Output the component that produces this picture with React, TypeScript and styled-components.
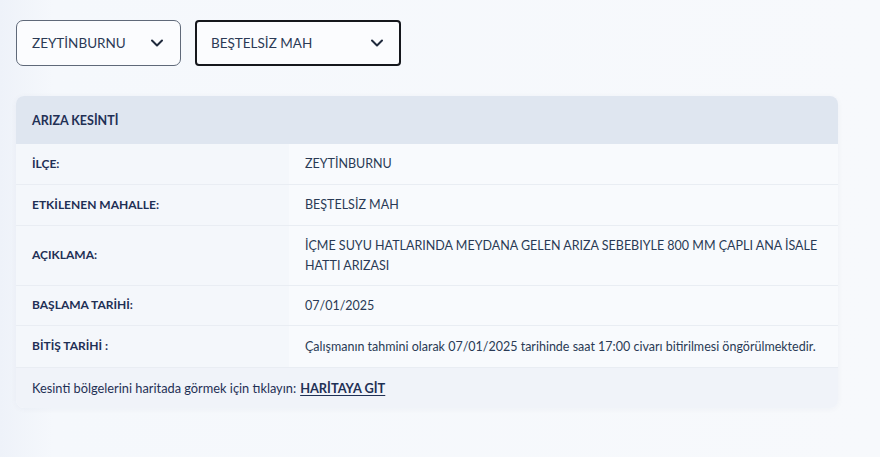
import React from "react";
import styled, { createGlobalStyle } from "styled-components";

const Global = createGlobalStyle`
  html, body { margin: 0; padding: 0; }
  *, *::before, *::after { box-sizing: border-box; }
  body {
    background: linear-gradient(90deg, #eef2f9 0%, #f5f8fc 6%, #f7f9fc 100%);
    font-family: Lato, "Noto Sans", sans-serif;
    color: #1f3055;
    min-height: 457px;
  }
`;

const Page = styled.div`
  padding: 20px 42px 40px 16px;
`;

const SelectRow = styled.div`
  display: flex;
  gap: 14px;
`;

const Select = styled.div<{ $w: number; $strong?: boolean }>`
  width: ${(p) => p.$w}px;
  height: 46px;
  display: flex;
  align-items: center;
  justify-content: space-between;
  padding: 0 ${(p) => (p.$strong ? 15 : 16)}px 0 ${(p) => (p.$strong ? 14 : 15)}px;
  background: #fbfcfe;
  border: ${(p) => (p.$strong ? "2px solid #15171c" : "1px solid #5f6979")};
  border-radius: ${(p) => (p.$strong ? 4 : 7)}px;
  font-size: 13.5px;
  color: #2b3a55;
`;

const Chevron = () => (
  <svg width="14" height="14" viewBox="0 0 14 14" fill="none">
    <path d="M2 4.5 L7 9.5 L12 4.5" stroke="#1f2a3d" strokeWidth="2" strokeLinecap="round" strokeLinejoin="round" />
  </svg>
);

const Card = styled.div`
  margin-top: 30px;
  width: 822px;
  border-radius: 8px;
  overflow: hidden;
  background: #f8fafd;
  box-shadow: 0 1px 6px rgba(30, 50, 90, 0.04);
`;

const Header = styled.div`
  height: 48px;
  display: flex;
  align-items: center;
  padding: 0 16px;
  background: #dfe6f0;
  font-size: 12.5px;
  font-weight: 700;
  color: #1f3055;
`;

const Row = styled.div<{ $h: number }>`
  display: grid;
  grid-template-columns: 273px 1fr;
  min-height: ${(p) => p.$h}px;
  border-bottom: 1px solid #e9edf3;
`;

const Label = styled.div`
  display: flex;
  align-items: center;
  padding: 0 16px 2px;
  background: #f4f7fb;
  font-size: 12px;
  font-weight: 700;
  color: #1f3055;
`;

const Value = styled.div`
  display: flex;
  align-items: center;
  padding: 0 16px;
  font-size: 12.5px;
  line-height: 20px;
  color: #2a3a55;
`;

const Footer = styled.div`
  height: 40px;
  display: flex;
  align-items: center;
  padding: 0 16px;
  background: #f0f3f9;
  font-size: 12.8px;
  color: #1f3055;
`;

const MapLink = styled.a`
  margin-left: 4px;
  font-weight: 700;
  color: #1f3055;
  text-decoration: underline;
  text-underline-offset: 2px;
`;

const rows: { label: string; value: string; h: number }[] = [
  { label: "İLÇE:", value: "ZEYTİNBURNU", h: 41 },
  { label: "ETKİLENEN MAHALLE:", value: "BEŞTELSİZ MAH", h: 41 },
  {
    label: "AÇIKLAMA:",
    value: "İÇME SUYU HATLARINDA MEYDANA GELEN ARIZA SEBEBIYLE 800 MM ÇAPLI ANA İSALE HATTI ARIZASI",
    h: 60,
  },
  { label: "BAŞLAMA TARİHİ:", value: "07/01/2025", h: 40 },
  {
    label: "BİTİŞ TARİHİ :",
    value: "Çalışmanın tahmini olarak 07/01/2025 tarihinde saat 17:00 civarı bitirilmesi öngörülmektedir.",
    h: 42,
  },
];

export default function App() {
  return (
    <>
      <Global />
      <Page>
        <SelectRow>
          <Select $w={165}>
            <span>ZEYTİNBURNU</span>
            <Chevron />
          </Select>
          <Select $w={206} $strong>
            <span>BEŞTELSİZ MAH</span>
            <Chevron />
          </Select>
        </SelectRow>
        <Card>
          <Header>ARIZA KESİNTİ</Header>
          {rows.map((r) => (
            <Row key={r.label} $h={r.h}>
              <Label>{r.label}</Label>
              <Value>{r.value}</Value>
            </Row>
          ))}
          <Footer>
            Kesinti bölgelerini haritada görmek için tıklayın:
            <MapLink href="#">HARİTAYA GİT</MapLink>
          </Footer>
        </Card>
      </Page>
    </>
  );
}
